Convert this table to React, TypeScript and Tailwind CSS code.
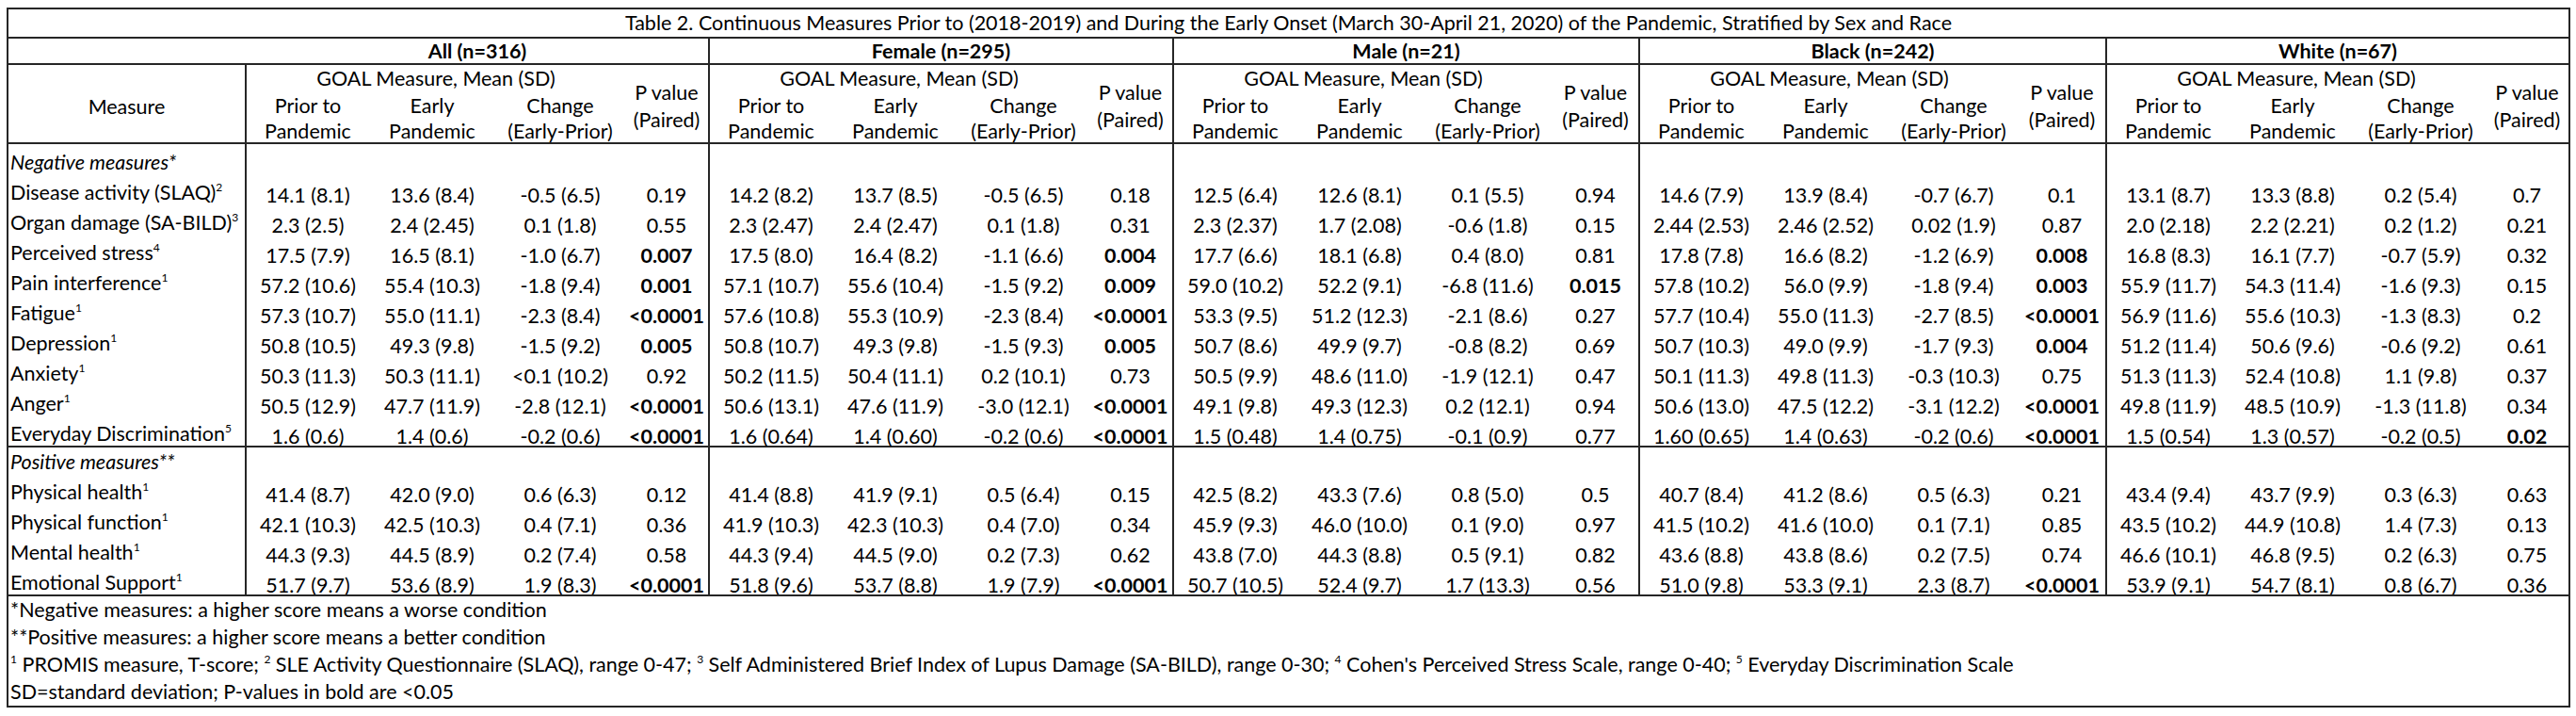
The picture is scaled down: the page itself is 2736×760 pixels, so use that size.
import React from "react";

type Group = {
  name: string;
  cls: string;
  neg: string[][];
  pos: string[][];
};

const negLabels: [string, string][] = [
  ["Disease activity (SLAQ)", "2"],
  ["Organ damage (SA-BILD)", "3"],
  ["Perceived stress", "4"],
  ["Pain interference", "1"],
  ["Fatigue", "1"],
  ["Depression", "1"],
  ["Anxiety", "1"],
  ["Anger", "1"],
  ["Everyday Discrimination", "5"],
];

const posLabels: [string, string][] = [
  ["Physical health", "1"],
  ["Physical function", "1"],
  ["Mental health", "1"],
  ["Emotional Support", "1"],
];

const groups: Group[] = [
  {
    name: "All (n=316)",
    cls: "w-[490px] shrink-0",
    neg: [
      ["14.1 (8.1)", "13.6 (8.4)", "-0.5 (6.5)", "0.19"],
      ["2.3 (2.5)", "2.4 (2.45)", "0.1 (1.8)", "0.55"],
      ["17.5 (7.9)", "16.5 (8.1)", "-1.0 (6.7)", "*0.007"],
      ["57.2 (10.6)", "55.4 (10.3)", "-1.8 (9.4)", "*0.001"],
      ["57.3 (10.7)", "55.0 (11.1)", "-2.3 (8.4)", "*<0.0001"],
      ["50.8 (10.5)", "49.3 (9.8)", "-1.5 (9.2)", "*0.005"],
      ["50.3 (11.3)", "50.3 (11.1)", "<0.1 (10.2)", "0.92"],
      ["50.5 (12.9)", "47.7 (11.9)", "-2.8 (12.1)", "*<0.0001"],
      ["1.6 (0.6)", "1.4 (0.6)", "-0.2 (0.6)", "*<0.0001"],
    ],
    pos: [
      ["41.4 (8.7)", "42.0 (9.0)", "0.6 (6.3)", "0.12"],
      ["42.1 (10.3)", "42.5 (10.3)", "0.4 (7.1)", "0.36"],
      ["44.3 (9.3)", "44.5 (8.9)", "0.2 (7.4)", "0.58"],
      ["51.7 (9.7)", "53.6 (8.9)", "1.9 (8.3)", "*<0.0001"],
    ],
  },
  {
    name: "Female (n=295)",
    cls: "w-[493px] shrink-0 border-l-2 border-[#262626]",
    neg: [
      ["14.2 (8.2)", "13.7 (8.5)", "-0.5 (6.5)", "0.18"],
      ["2.3 (2.47)", "2.4 (2.47)", "0.1 (1.8)", "0.31"],
      ["17.5 (8.0)", "16.4 (8.2)", "-1.1 (6.6)", "*0.004"],
      ["57.1 (10.7)", "55.6 (10.4)", "-1.5 (9.2)", "*0.009"],
      ["57.6 (10.8)", "55.3 (10.9)", "-2.3 (8.4)", "*<0.0001"],
      ["50.8 (10.7)", "49.3 (9.8)", "-1.5 (9.3)", "*0.005"],
      ["50.2 (11.5)", "50.4 (11.1)", "0.2 (10.1)", "0.73"],
      ["50.6 (13.1)", "47.6 (11.9)", "-3.0 (12.1)", "*<0.0001"],
      ["1.6 (0.64)", "1.4 (0.60)", "-0.2 (0.6)", "*<0.0001"],
    ],
    pos: [
      ["41.4 (8.8)", "41.9 (9.1)", "0.5 (6.4)", "0.15"],
      ["41.9 (10.3)", "42.3 (10.3)", "0.4 (7.0)", "0.34"],
      ["44.3 (9.4)", "44.5 (9.0)", "0.2 (7.3)", "0.62"],
      ["51.8 (9.6)", "53.7 (8.8)", "1.9 (7.9)", "*<0.0001"],
    ],
  },
  {
    name: "Male (n=21)",
    cls: "w-[495px] shrink-0 border-l-2 border-[#262626]",
    neg: [
      ["12.5 (6.4)", "12.6 (8.1)", "0.1 (5.5)", "0.94"],
      ["2.3 (2.37)", "1.7 (2.08)", "-0.6 (1.8)", "0.15"],
      ["17.7 (6.6)", "18.1 (6.8)", "0.4 (8.0)", "0.81"],
      ["59.0 (10.2)", "52.2 (9.1)", "-6.8 (11.6)", "*0.015"],
      ["53.3 (9.5)", "51.2 (12.3)", "-2.1 (8.6)", "0.27"],
      ["50.7 (8.6)", "49.9 (9.7)", "-0.8 (8.2)", "0.69"],
      ["50.5 (9.9)", "48.6 (11.0)", "-1.9 (12.1)", "0.47"],
      ["49.1 (9.8)", "49.3 (12.3)", "0.2 (12.1)", "0.94"],
      ["1.5 (0.48)", "1.4 (0.75)", "-0.1 (0.9)", "0.77"],
    ],
    pos: [
      ["42.5 (8.2)", "43.3 (7.6)", "0.8 (5.0)", "0.5"],
      ["45.9 (9.3)", "46.0 (10.0)", "0.1 (9.0)", "0.97"],
      ["43.8 (7.0)", "44.3 (8.8)", "0.5 (9.1)", "0.82"],
      ["50.7 (10.5)", "52.4 (9.7)", "1.7 (13.3)", "0.56"],
    ],
  },
  {
    name: "Black (n=242)",
    cls: "w-[496px] shrink-0 border-l-2 border-[#262626]",
    neg: [
      ["14.6 (7.9)", "13.9 (8.4)", "-0.7 (6.7)", "0.1"],
      ["2.44 (2.53)", "2.46 (2.52)", "0.02 (1.9)", "0.87"],
      ["17.8 (7.8)", "16.6 (8.2)", "-1.2 (6.9)", "*0.008"],
      ["57.8 (10.2)", "56.0 (9.9)", "-1.8 (9.4)", "*0.003"],
      ["57.7 (10.4)", "55.0 (11.3)", "-2.7 (8.5)", "*<0.0001"],
      ["50.7 (10.3)", "49.0 (9.9)", "-1.7 (9.3)", "*0.004"],
      ["50.1 (11.3)", "49.8 (11.3)", "-0.3 (10.3)", "0.75"],
      ["50.6 (13.0)", "47.5 (12.2)", "-3.1 (12.2)", "*<0.0001"],
      ["1.60 (0.65)", "1.4 (0.63)", "-0.2 (0.6)", "*<0.0001"],
    ],
    pos: [
      ["40.7 (8.4)", "41.2 (8.6)", "0.5 (6.3)", "0.21"],
      ["41.5 (10.2)", "41.6 (10.0)", "0.1 (7.1)", "0.85"],
      ["43.6 (8.8)", "43.8 (8.6)", "0.2 (7.5)", "0.74"],
      ["51.0 (9.8)", "53.3 (9.1)", "2.3 (8.7)", "*<0.0001"],
    ],
  },
  {
    name: "White (n=67)",
    cls: "flex-1 min-w-0 border-l-2 border-[#262626]",
    neg: [
      ["13.1 (8.7)", "13.3 (8.8)", "0.2 (5.4)", "0.7"],
      ["2.0 (2.18)", "2.2 (2.21)", "0.2 (1.2)", "0.21"],
      ["16.8 (8.3)", "16.1 (7.7)", "-0.7 (5.9)", "0.32"],
      ["55.9 (11.7)", "54.3 (11.4)", "-1.6 (9.3)", "0.15"],
      ["56.9 (11.6)", "55.6 (10.3)", "-1.3 (8.3)", "0.2"],
      ["51.2 (11.4)", "50.6 (9.6)", "-0.6 (9.2)", "0.61"],
      ["51.3 (11.3)", "52.4 (10.8)", "1.1 (9.8)", "0.37"],
      ["49.8 (11.9)", "48.5 (10.9)", "-1.3 (11.8)", "0.34"],
      ["1.5 (0.54)", "1.3 (0.57)", "-0.2 (0.5)", "*0.02"],
    ],
    pos: [
      ["43.4 (9.4)", "43.7 (9.9)", "0.3 (6.3)", "0.63"],
      ["43.5 (10.2)", "44.9 (10.8)", "1.4 (7.3)", "0.13"],
      ["46.6 (10.1)", "46.8 (9.5)", "0.2 (6.3)", "0.75"],
      ["53.9 (9.1)", "54.7 (8.1)", "0.8 (6.7)", "0.36"],
    ],
  },
];

function Sup({ n }: { n: string }) {
  return <sup className="text-[12px] top-[-9px]">{n}</sup>;
}

function DataRow({ values }: { values: string[] }) {
  return (
    <div className="grid grid-cols-[130px_134px_138px_1fr] h-[32px] pt-[6px]">
      {values.map((v, i) => {
        const bold = v.startsWith("*");
        const t = bold ? v.slice(1) : v;
        return (
          <div
            key={i}
            className={
              bold
                ? "flex items-center justify-center whitespace-nowrap font-bold"
                : "flex items-center justify-center whitespace-nowrap"
            }
          >
            {t}
          </div>
        );
      })}
    </div>
  );
}

function GroupColumn({ g }: { g: Group }) {
  return (
    <div className={`${g.cls} flex flex-col`}>
      <div className="h-[28px] border-b-2 border-[#262626] flex items-center justify-center font-bold">
        {g.name}
      </div>
      <div className="h-[84px] border-b-2 border-[#262626] grid grid-cols-[402px_1fr]">
        <div className="flex flex-col">
          <div className="h-[28px] flex items-center justify-center">GOAL Measure, Mean (SD)</div>
          <div className="grid grid-cols-[130px_134px_138px] pt-[2px] leading-[27px] text-center">
            <div className="flex flex-col">
              <span>Prior to</span>
              <span>Pandemic</span>
            </div>
            <div className="flex flex-col">
              <span>Early</span>
              <span>Pandemic</span>
            </div>
            <div className="flex flex-col">
              <span>Change</span>
              <span>(Early-Prior)</span>
            </div>
          </div>
        </div>
        <div className="flex flex-col items-center justify-center leading-[29px] pt-[3px]">
          <span>P value</span>
          <span>(Paired)</span>
        </div>
      </div>
      <div className="border-b-2 border-[#262626]">
        <div className="h-[32px]" />
        {g.neg.map((r, i) => (
          <DataRow key={i} values={r} />
        ))}
      </div>
      <div>
        <div className="h-[28px]" />
        {g.pos.map((r, i) => (
          <DataRow key={i} values={r} />
        ))}
      </div>
    </div>
  );
}

function LabelRow({ label, sup }: { label: string; sup: string }) {
  return (
    <div className="h-[32px] pt-[6px] pl-[2px] flex items-center whitespace-nowrap">
      <span>
        {label}
        <Sup n={sup} />
      </span>
    </div>
  );
}

export default function App() {
  return (
    <div className="w-[2736px] h-[760px] bg-white pt-[8px] pl-[7px] font-['Lato',sans-serif] text-[21.5px] text-black leading-normal">
      <div className="w-[2723px] border-2 border-[#262626] flex flex-col">
        <div className="h-[31px] border-b-2 border-[#262626] flex items-center justify-center whitespace-nowrap">
          Table 2. Continuous Measures Prior to (2018-2019) and During the Early Onset (March 30-April 21, 2020) of the
          Pandemic, Stratified by Sex and Race
        </div>
        <div className="flex">
          <div className="w-[253px] shrink-0 flex flex-col">
            <div className="h-[28px] border-b-2 border-[#262626]" />
            <div className="flex-1 flex flex-col border-r-2 border-[#262626]">
              <div className="h-[84px] border-b-2 border-[#262626] flex items-center justify-center pt-[6px]">
                Measure
              </div>
              <div className="border-b-2 border-[#262626]">
                <div className="h-[32px] pt-[6px] pl-[2px] flex items-center italic whitespace-nowrap">
                  Negative measures*
                </div>
                {negLabels.map(([l, s]) => (
                  <LabelRow key={l} label={l} sup={s} />
                ))}
              </div>
              <div>
                <div className="h-[28px] pt-[3px] pl-[2px] flex items-center italic whitespace-nowrap">
                  Positive measures**
                </div>
                {posLabels.map(([l, s]) => (
                  <LabelRow key={l} label={l} sup={s} />
                ))}
              </div>
            </div>
          </div>
          {groups.map((g) => (
            <GroupColumn key={g.name} g={g} />
          ))}
        </div>
        <div className="border-t-2 border-[#262626] flex flex-col pl-[2px]">
          <div className="h-[29px] flex items-center whitespace-nowrap">
            *Negative measures: a higher score means a worse condition
          </div>
          <div className="h-[29px] flex items-center whitespace-nowrap">
            **Positive measures: a higher score means a better condition
          </div>
          <div className="h-[29px] flex items-center whitespace-nowrap">
            <span>
              <Sup n="1" /> PROMIS measure, T-score; <Sup n="2" /> SLE Activity Questionnaire (SLAQ), range 0-47;{" "}
              <Sup n="3" /> Self Administered Brief Index of Lupus Damage (SA-BILD), range 0-30; <Sup n="4" /> Cohen's
              Perceived Stress Scale, range 0-40; <Sup n="5" /> Everyday Discrimination Scale
            </span>
          </div>
          <div className="h-[29px] flex items-center whitespace-nowrap">
            SD=standard deviation; P-values in bold are &lt;0.05
          </div>
        </div>
      </div>
    </div>
  );
}
